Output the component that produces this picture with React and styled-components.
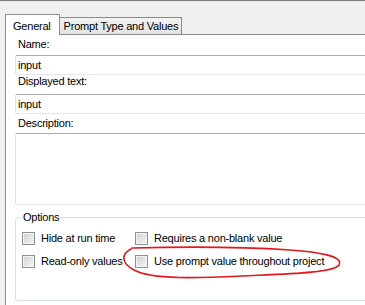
import React from 'react'
import styled, { createGlobalStyle } from 'styled-components'

const Global = createGlobalStyle`
	html, body {
		margin: 0;
		background: #f0f0f0;
		overflow: hidden;
	}
	body {
		font-family: "Liberation Sans", Arial, sans-serif;
		font-size: 11px;
		letter-spacing: -0.22px;
		color: #000;
	}
`

const Window = styled.div`
	position: relative;
	width: 365px;
	height: 305px;
	box-sizing: border-box;
	border-top: 1px solid #7b7b7b;
	padding: 13px 0 0 5px;
	overflow: hidden;
`

const TabStrip = styled.div`
	display: flex;
	align-items: flex-end;
	height: 20px;
`

const Tab = styled.div`
	box-sizing: border-box;
	border: 1px solid #898c95;
	border-bottom: none;
	line-height: 13px;
	white-space: nowrap;
	${p => p.active ? `
		position: relative;
		z-index: 1;
		height: 21px;
		margin-bottom: -1px;
		padding: 5px 8px 0 7px;
		background: #fff;
	` : `
		height: 17px;
		border-left: none;
		padding: 2px 3px 0 4px;
		background: linear-gradient(#f3f3f3, #e3e3e3);
	`}
`

const Pane = styled.div`
	width: 400px;
	height: 300px;
	box-sizing: border-box;
	background: #fff;
	border-top: 1px solid #898c95;
	border-left: 1px solid #898c95;
	padding: 3px 0 0 9px;
	display: flex;
	flex-direction: column;
`

const Label = styled.div`
	line-height: 13px;
	height: 13px;
	margin: ${p => p.top || 0}px 0 0 3px;
`

const TextBox = styled.input`
	box-sizing: border-box;
	width: 380px;
	height: 20px;
	margin: ${p => p.top || 0}px 0 0 0;
	padding: 0 2px;
	font: inherit;
	letter-spacing: inherit;
	border: 1px solid;
	border-color: #abadb3 #e2e3ea #e3e9ef #e2e3ea;
	border-radius: 2px;
	outline: none;
	background: #fff;
`

const TextArea = styled.textarea`
	box-sizing: border-box;
	width: 380px;
	height: 72px;
	margin: 3px 0 0 0;
	padding: 2px;
	font: inherit;
	resize: none;
	border: 1px solid;
	border-color: #abadb3 #e2e3ea #e3e9ef #e2e3ea;
	border-radius: 2px;
	outline: none;
`

const Group = styled.fieldset`
	margin: 6px 0 0 0;
	width: 380px;
	box-sizing: border-box;
	height: 90px;
	border: 1px solid #d5dfe5;
	border-radius: 3px;
	padding: 8px 6px 0 6px;
	& legend {
		padding: 0 1px;
		line-height: 13px;
	}
`

const Options = styled.div`
	display: grid;
	grid-template-columns: 113px auto;
	row-gap: 10px;
`

const Check = styled.label`
	display: flex;
	align-items: center;
	gap: 6px;
	line-height: 13px;
	white-space: nowrap;
`

const Box = styled.span`
	width: 13px;
	height: 13px;
	box-sizing: border-box;
	border: 1px solid #8e8f8f;
	background: linear-gradient(135deg, #cfd1d4, #f6f6f6);
	box-shadow: inset 0 0 0 1px #f4f4f4;
	flex: none;
`

const Annotation = styled.svg`
	position: absolute;
	left: 0;
	top: 0;
	pointer-events: none;
`

const CheckItem = ({ children }) => (
	<Check><Box />{children}</Check>
)

export default function App() {
	return (
		<Window>
			<Global />
			<TabStrip>
				<Tab active>General</Tab>
				<Tab>Prompt Type and Values</Tab>
			</TabStrip>
			<Pane>
				<Label>Name:</Label>
				<TextBox top={4} defaultValue="input" />
				<Label>Displayed text:</Label>
				<TextBox top={6} defaultValue="input" />
				<Label top={3}>Description:</Label>
				<TextArea />
				<Group>
					<legend>Options</legend>
					<Options>
						<CheckItem>Hide at run time</CheckItem>
						<CheckItem>Requires a non-blank value</CheckItem>
						<CheckItem>Read-only values</CheckItem>
						<CheckItem>Use prompt value throughout project</CheckItem>
					</Options>
				</Group>
			</Pane>
			<Annotation width="365" height="305" viewBox="0 0 365 305">
				<path
					d="M132 247 C170 246 230 245 290 249 C318 251 344 255 339 264 C334 272 285 273 242 275 C200 277 152 279 134 269 C121 262 121 253 131 248"
					fill="none"
					stroke="#e5161d"
					strokeWidth="1.6"
					strokeLinecap="round"
				/>
			</Annotation>
		</Window>
	)
}
